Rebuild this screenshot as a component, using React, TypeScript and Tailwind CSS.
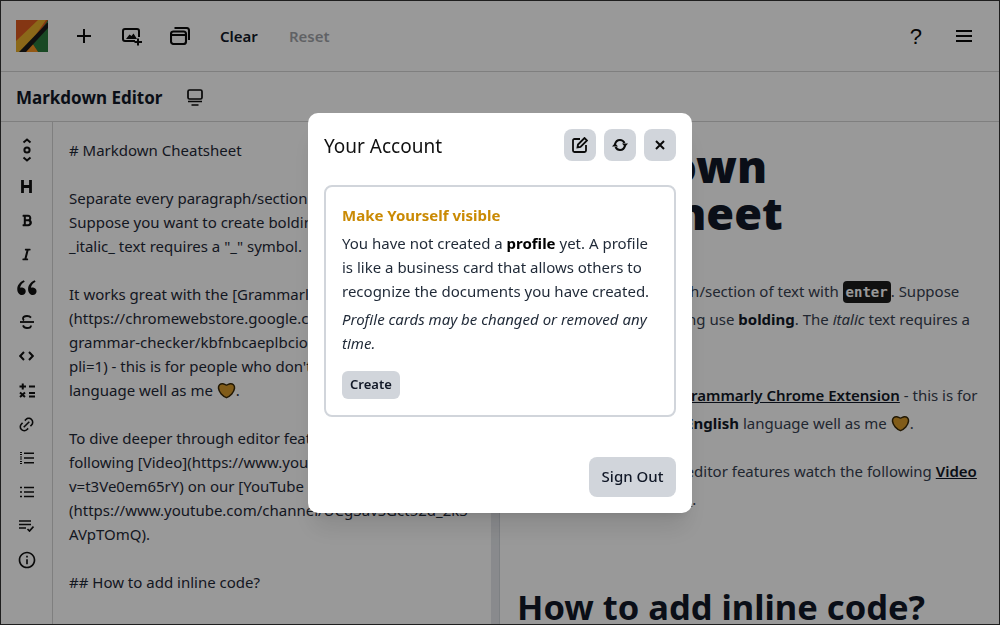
import React from "react";
import { FaBold, FaItalic } from "react-icons/fa";
import { RiDoubleQuotesL, RiLinkM, RiInformationLine } from "react-icons/ri";

const Heart = () => (
  <svg viewBox="0 0 20 18" className="inline-block w-[19px] h-[17px] align-[-3px]">
    <path d="M10 16.5 C6 15 2 11 1.5 6.5 C1.2 3.5 3.5 1.5 6 1.8 C7.5 2 8.5 3 10 3.3 C11.5 3 12.5 2 14 1.8 C16.5 1.5 18.8 3.5 18.5 6.5 C18 11 14 15 10 16.5 Z" fill="#d89a2b" stroke="#3a2a08" strokeWidth="1.6" />
  </svg>
);

const Logo = () => (
  <svg viewBox="0 0 32 32" className="w-8 h-8 shrink-0">
    <rect width="32" height="32" fill="#dd5a20" />
    <path d="M32 0V32H22L16 23Z" fill="#2a7a3c" />
    <path d="M10 32 L16 23 L22 32Z" fill="#f59322" />
    <path d="M0 21 L22 0 H30 L8 32 H0Z" fill="#e8ad2a" />
    <path d="M31 3 L3 32 H10 L32 8 V3Z" fill="#1a1a1a" />
  </svg>
);

const ExpandIcon = () => (
  <svg viewBox="0 0 10 24" className="w-[10px] h-6" fill="none" stroke="#111" strokeWidth="2">
    <path d="M1.5 4.5 L5 1.5 L8.5 4.5" /><circle cx="5" cy="12" r="2.6" /><path d="M1.5 19.5 L5 22.5 L8.5 19.5" />
  </svg>
);

const HIcon = () => (
  <svg viewBox="0 0 11 13" className="w-[11px] h-[13px]" fill="none" stroke="#111" strokeWidth="2.8">
    <path d="M1.5 0V13M9.5 0V13M1.5 6.5H9.5" />
  </svg>
);

const StrikeIcon = () => (
  <svg viewBox="0 0 14 14" className="w-[14px] h-[14px]" fill="none" stroke="#111" strokeWidth="1.8">
    <path d="M0 7H14" />
    <path d="M11 2.6C10 1.3 8.6 1 7 1C4.6 1 3 2 3 3.6C3 4.6 3.4 5 4 5.4M3 10.4C3.6 12 5 13 7 13C9.4 13 11 12 11 10.4" />
  </svg>
);

const CodeIcon = () => (
  <svg viewBox="0 0 15 10" className="w-[15px] h-[10px]" fill="none" stroke="#111" strokeWidth="2">
    <path d="M5 1L1.2 5L5 9M10 1L13.8 5L10 9" />
  </svg>
);

const MathIcon = () => (
  <svg viewBox="0 0 16 15" className="w-4 h-[15px]" fill="none" stroke="#111" strokeWidth="2">
    <path d="M0.5 3.5H7M3.75 0.5V6.5M10 3.5H16M1 9.5L6 14M6 9.5L1 14M10 10H16M10 13.5H16" />
  </svg>
);

const TaskIcon = () => (
  <svg viewBox="0 0 15 12" className="w-[15px] h-3" fill="none" stroke="#111" strokeWidth="1.7">
    <path d="M0 1H12M0 4.5H12M0 8H7M8.5 9L10.5 11L14.5 6.5" />
  </svg>
);

const DottedList = () => (
  <svg viewBox="0 0 14 12" className="w-[14px] h-3" fill="none" stroke="#111" strokeWidth="1.6">
    <path d="M4 1.2H14M4 6H14M4 10.8H14" />
    <path d="M0 .5H2M0 2.5H2M0 5H2M0 7H2M0 9.5H2M0 11.5H2" strokeWidth="1" />
  </svg>
);

const BulletList = () => (
  <svg viewBox="0 0 14 12" className="w-[14px] h-3" fill="none" stroke="#111" strokeWidth="1.7">
    <path d="M4 1.5H14M4 6H14M4 10.5H14M0 1.5H2M0 6H2M0 10.5H2" />
  </svg>
);

const ImageAdd = () => (
  <svg viewBox="0 0 21 18" className="w-[21px] h-[18px]" fill="none" stroke="#0a0a0a" strokeWidth="2">
    <path d="M13 13H3C1.9 13 1 12.1 1 11V3C1 1.9 1.9 1 3 1H15C16.1 1 17 1.9 17 3V9" />
    <path d="M4 11L7.5 6.5L9.5 8L11.5 5.5L15 11Z" fill="#0a0a0a" stroke="none" />
    <path d="M16 10.5V17.5M12.5 14H20" />
  </svg>
);

const WindowsIcon = () => (
  <svg viewBox="0 0 20 18" className="w-5 h-[18px]" fill="none" stroke="#0a0a0a" strokeWidth="2.1">
    <rect x="1" y="4.5" width="15" height="12.5" rx="2.5" />
    <path d="M1 8H16M4.5 1H16.5C18 1 19 2 19 3.5V13" />
  </svg>
);

const BoardIcon = () => (
  <svg viewBox="0 0 16 17" className="w-4 h-[17px]" fill="none" stroke="#0a0a0a" strokeWidth="1.7">
    <rect x="1" y="1" width="14" height="9" rx="1.5" />
    <path d="M1 12.5H15M4.5 16H11.5" />
  </svg>
);

const EditIcon = () => (
  <svg viewBox="0 0 16 16" className="w-4 h-4" fill="none" stroke="#0a0a0a" strokeWidth="1.8">
    <path d="M8 2H2.5C1.7 2 1 2.7 1 3.5V13.5C1 14.3 1.7 15 2.5 15H12.5C13.3 15 14 14.3 14 13.5V8" />
    <path d="M5.5 10.5L6 7.5L12.5 1L15 3.5L8.5 10Z" />
  </svg>
);

const SyncIcon = () => (
  <svg viewBox="0 0 16 12" className="w-4 h-3" fill="none" stroke="#0a0a0a" strokeWidth="2">
    <path d="M3 5.5C3.5 3 5.5 1 8 1C10 1 11.5 2 12.5 4" />
    <path d="M13 6.5C12.5 9 10.5 11 8 11C6 11 4.5 10 3.5 8" />
    <path d="M10 4.5H16L13 8Z" fill="#0a0a0a" stroke="none" />
    <path d="M0 7.5H6L3 4Z" fill="#0a0a0a" stroke="none" />
  </svg>
);

const CloseIcon = () => (
  <svg viewBox="0 0 10 10" className="w-[10px] h-[10px]" fill="none" stroke="#0a0a0a" strokeWidth="2">
    <path d="M1 1L9 9M9 1L1 9" />
  </svg>
);

const editor = [
  "# Markdown Cheatsheet",
  "",
  "Separate every paragraph/section of text with `enter`.",
  "Suppose you want to create bolding use **bolding**. The",
  "_italic_ text requires a \"_\" symbol.",
  "",
  "It works great with the [Grammarly Chrome Extension]",
  "(https://chromewebstore.google.com/detail/grammarly-",
  "grammar-checker/kbfnbcaeplbcioakkpcpgfkobkghlhen?",
  "pli=1) - this is for people who don't know **English**",
  "language well as me ",
  "",
  "To dive deeper through editor features watch the",
  "following [Video](https://www.youtube.com/watch?",
  "v=t3Ve0em65rY) on our [YouTube channel]",
  "(https://www.youtube.com/channel/UCg3avSGct52d_2k3",
  "AVpTOmQ).",
  "",
  "## How to add inline code?",
  "",
];

const sideIcons = [
  <ExpandIcon />,
  <HIcon />,
  <FaBold className="w-[12px] h-[13px] text-[#111]" />,
  <FaItalic className="w-[13px] h-[13px] text-[#111]" />,
  <RiDoubleQuotesL className="w-[26px] h-[26px] text-[#111]" />,
  <StrikeIcon />,
  <CodeIcon />,
  <MathIcon />,
  <RiLinkM className="w-[19px] h-[19px] text-[#111]" />,
  <DottedList />,
  <BulletList />,
  <TaskIcon />,
  <RiInformationLine className="w-5 h-5 text-[#111]" />,
];

export default function App() {
  return (
    <div className="h-[625px] w-[1000px] overflow-hidden bg-white border border-[#333] flex flex-col text-[#111] font-['Noto_Sans','Open_Sans',sans-serif]">
      <header className="h-[71px] shrink-0 border-b border-[#d4d4d4] flex items-center pl-[15px] pr-[27px]">
        <Logo />
        <svg viewBox="0 0 14 14" className="w-[14px] h-[14px] ml-[29px]" fill="none" stroke="#0a0a0a" strokeWidth="2">
          <path d="M7 0V14M0 7H14" />
        </svg>
        <span className="ml-[31px] pt-[1px]"><ImageAdd /></span>
        <span className="ml-[27px]"><WindowsIcon /></span>
        <span className="ml-[30px] font-semibold text-[15px] text-[#111827]">Clear</span>
        <span className="ml-[31px] font-semibold text-[15px] text-[#111827] opacity-40">Reset</span>
        <span className="ml-auto text-[22px] font-['Liberation_Sans',sans-serif] text-[#0a0a0a]">?</span>
        <svg viewBox="0 0 16 12" className="w-4 h-3 ml-[34px]" fill="none" stroke="#0a0a0a" strokeWidth="2">
          <path d="M0 1H16M0 6H16M0 11H16" />
        </svg>
      </header>
      <div className="h-[50px] shrink-0 border-b border-[#d4d4d4] flex items-center pl-[15px]">
        <span className="font-bold text-[17px] text-[#111827] pt-[2px]">Markdown Editor</span>
        <span className="ml-[25px] pt-[1px]"><BoardIcon /></span>
      </div>
      <div className="flex-1 flex min-h-0">
        <aside className="w-[52px] shrink-0 border-r border-[#d4d4d4] flex flex-col items-center pt-[11px]">
          {sideIcons.map((ic, i) => (
            <div key={i} className={i === 0 ? "h-[36px] w-full flex items-center justify-center pb-[2px]" : "h-[34px] w-full flex items-center justify-center"}>{ic}</div>
          ))}
        </aside>
        <div className="w-[438px] shrink-0 overflow-hidden pl-[16px] pt-[16px] text-[15px] leading-[24px] text-[#1f2937]">
          {editor.map((l, i) => (
            <div key={i} className="h-6 whitespace-pre">{l}{i === 10 && <><Heart />.</>}</div>
          ))}
          <div className="h-6 ml-[196px]">`</div>
        </div>
        <div className="w-[9px] shrink-0 bg-[#e5e7eb] border-r border-[#d1d5db]" />
        <main className="flex-1 overflow-hidden pl-[17px] pr-[18px] text-[#374151] text-[15px] leading-[28px]">
          <h1 className="mt-[20px] text-[45px] leading-[47px] font-black text-[#111827]">Markdown Cheatsheet</h1>
          <p className="mt-[41px]">
            Separate every paragraph/section of text with{" "}
            <code className="bg-[#1c1c1c] text-white font-bold font-['DejaVu_Sans_Mono',monospace] text-[14px] leading-none rounded-[4px] px-[3px] py-[3px]">enter</code>. Suppose you want to create bolding use <strong className="text-[#111827]">bolding</strong>. The <em>italic</em> text requires a "_" symbol.
          </p>
          <p className="mt-[20px]">
            It works great with the <a className="underline font-semibold text-[#111827]">Grammarly Chrome Extension</a> - this is for people who don't know <strong className="text-[#111827]">English</strong> language well as me <Heart />.
          </p>
          <p className="mt-[20px]">
            To dive deeper through editor features watch the following <a className="underline font-semibold text-[#111827]">Video</a> on our <a className="underline font-semibold text-[#111827]">YouTube channel</a>.
          </p>
          <h2 className="mt-[74px] text-[34.5px] leading-[40px] font-bold text-[#111827]">How to add inline code?</h2>
        </main>
      </div>

      <div className="fixed inset-0 bg-black/40 flex items-center justify-center">
        <div className="w-[384px] h-[400px] bg-white rounded-[10px] p-4 flex flex-col text-[#111] shadow-xl">
          <div className="flex items-center justify-between h-8 mb-6">
            <span className="text-[19px] text-[#111] pt-1">Your Account</span>
            <div className="flex gap-2">
              <button className="w-8 h-8 bg-[#d1d5db] rounded-lg flex items-center justify-center"><EditIcon /></button>
              <button className="w-8 h-8 bg-[#d1d5db] rounded-lg flex items-center justify-center"><SyncIcon /></button>
              <button className="w-8 h-8 bg-[#d1d5db] rounded-lg flex items-center justify-center"><CloseIcon /></button>
            </div>
          </div>
          <div className="h-[232px] border-2 border-[#d1d5db] rounded-lg px-4 pt-[16px]">
            <h3 className="text-[#ca8a04] font-bold text-[15px] leading-[24px]">Make Yourself visible</h3>
            <p className="mt-1 text-[15px] leading-[24px] text-[#1f2937]">You have not created a <strong className="text-black">profile</strong> yet. A profile is like a business card that allows others to recognize the documents you have created.</p>
            <p className="mt-1 text-[15px] leading-[24px] italic text-[#1f2937]">Profile cards may be changed or removed any time.</p>
            <button className="block mt-4 h-7 px-2 bg-[#d1d5db] rounded-md text-[13px] font-semibold text-[#111827]">Create</button>
          </div>
          <div className="mt-auto flex justify-end">
            <button className="h-10 w-[87px] bg-[#d1d5db] rounded-lg text-[15px] font-medium text-[#111827]">Sign Out</button>
          </div>
        </div>
      </div>
    </div>
  );
}
